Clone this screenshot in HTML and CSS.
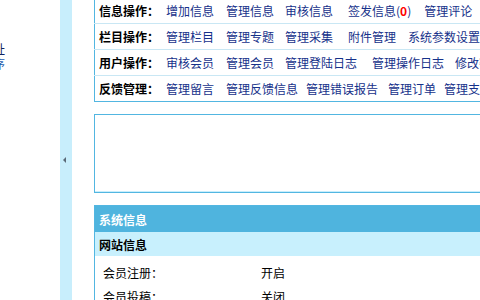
FILE: index.html
```html
<!DOCTYPE html>
<html lang="zh-CN">
<head>
  <meta charset="UTF-8">
  <title>后台管理首页</title>
  <link rel="stylesheet" href="styles.css">
</head>
<body>
  <div class="frame">
    <!-- Left menu (scrolled) -->
    <div class="menu">
      <ul>
        <li><a href="#">网站地址</a></li>
        <li><a href="#" class="alt">更新程序</a></li>
      </ul>
    </div>

    <!-- Menu switch bar -->
    <div class="switch"><span class="arrow"></span></div>

    <!-- Main content -->
    <div class="main">
      <table class="ops">
        <tr>
          <td class="label">信息操作：</td>
          <td>
            <div class="links">
              <a href="#">增加信息</a>
              <a href="#" class="g11">管理信息</a>
              <a href="#" class="g15">审核信息</a>
              <a href="#" class="g13">签发信息(<b class="num">0</b>)</a>
              <a href="#">管理评论</a>
            </div>
          </td>
        </tr>
        <tr>
          <td class="label">栏目操作：</td>
          <td>
            <div class="links">
              <a href="#">管理栏目</a>
              <a href="#" class="g11">管理专题</a>
              <a href="#" class="g15">管理采集</a>
              <a href="#">附件管理</a>
              <a href="#">系统参数设置</a>
            </div>
          </td>
        </tr>
        <tr>
          <td class="label">用户操作：</td>
          <td>
            <div class="links">
              <a href="#">审核会员</a>
              <a href="#" class="g11">管理会员</a>
              <a href="#" class="g15">管理登陆日志</a>
              <a href="#" class="g11">管理操作日志</a>
              <a href="#">修改密码</a>
            </div>
          </td>
        </tr>
        <tr>
          <td class="label">反馈管理：</td>
          <td>
            <div class="links">
              <a href="#">管理留言</a>
              <a href="#" class="g8">管理反馈信息</a>
              <a href="#" class="g10">管理错误报告</a>
              <a href="#" class="g8">管理订单</a>
              <a href="#">管理支付记录</a>
            </div>
          </td>
        </tr>
      </table>

      <div class="notice"></div>

      <table class="info">
        <tr class="head">
          <td colspan="2">系统信息</td>
        </tr>
        <tr class="sub">
          <td colspan="2">网站信息</td>
        </tr>
        <tr class="first">
          <td class="key">会员注册：</td>
          <td>开启</td>
        </tr>
        <tr>
          <td class="key">会员投稿：</td>
          <td>关闭</td>
        </tr>
      </table>
    </div>
  </div>
</body>
</html>
```

FILE: styles.css
```css
/* Styles */
body {
  margin: 0;
  background: #ffffff;
  color: #000000;
  font-family: "Noto Sans CJK SC", "Noto Sans", sans-serif;
  font-size: 12px;
}

a {
  color: #16318a;
  text-decoration: none;
}

.frame {
  display: flex;
  height: 300px;
  overflow: hidden;
}

/* Left menu */
.menu {
  width: 60px;
  flex-shrink: 0;
  overflow: hidden;
}

.menu ul {
  list-style: none;
  margin: 41px 0 0 -43px;
  padding: 0;
  white-space: nowrap;
}

.menu li {
  line-height: 15px;
}

.menu a {
  color: #0f2460;
}

.menu a.alt {
  color: #2a5fb0;
}

/* Switch bar */
.switch {
  width: 12px;
  flex-shrink: 0;
  padding-top: 20px;
  box-sizing: border-box;
  background: #c8eefc;
  display: flex;
  align-items: center;
}

.arrow {
  width: 0;
  height: 0;
  margin: 0 0 0 3px;
  border-top: 3px solid transparent;
  border-bottom: 3px solid transparent;
  border-right: 3px solid #5a6a78;
}

/* Main */
.main {
  flex: 1;
  overflow: hidden;
  padding-left: 22px;
}

table {
  border-collapse: collapse;
  width: 640px;
}

.ops {
  margin-top: -3px;
  border: 1px solid #52b6e1;
}

.ops tr + tr td {
  border-top: 1px solid #c9e7f4;
}

.ops td {
  height: 25px;
  padding: 0;
  white-space: nowrap;
}

.ops .label {
  width: 67px;
  padding-left: 4px;
  font-weight: bold;
}

.links {
  display: flex;
}

.links a {
  margin-right: 12px;
}

.links .g8 { margin-right: 8px; }
.links .g10 { margin-right: 10px; }
.links .g11 { margin-right: 11px; }
.links .g13 { margin-right: 13px; }
.links .g15 { margin-right: 15px; }

.num {
  color: #ff0000;
}

.notice {
  width: 640px;
  height: 77px;
  margin-top: 12px;
  border: 1px solid #52b6e1;
  box-shadow: inset 0 -1px 0 #c8eefc;
}

.info {
  margin-top: 12px;
  border: 1px solid #52b6e1;
}

.info td {
  height: 24px;
  padding: 0 8px;
  white-space: nowrap;
}

.info .first td {
  height: 24px;
  padding-top: 4px;
}

.info .head td {
  height: 26px;
  padding-left: 4px;
  background: #4fb4de;
  color: #ffffff;
  font-weight: bold;
}

.info .sub td {
  height: 24px;
  padding-left: 4px;
  padding-top: 0;
  background: #c8f0fd;
  font-weight: bold;
}

.info .key {
  width: 142px;
}
```
